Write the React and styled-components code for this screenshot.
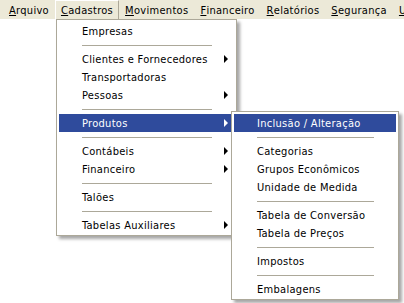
import styled, { createGlobalStyle } from 'styled-components'

const Global = createGlobalStyle`
  body {
    margin: 0;
    background: #fff;
    font-family: "DejaVu Sans Condensed", "DejaVu Sans", sans-serif;
    font-size: 11px;
    letter-spacing: 0.3px;
    color: #000;
  }
`

const Page = styled.div`
  width: 404px;
  height: 303px;
  overflow: hidden;
  background: #fff;
`

const MenuBar = styled.div`
  display: flex;
  height: 19px;
  align-items: stretch;
  padding-left: 3px;
  background: #ece9d8;
  white-space: nowrap;
`

const BarItem = styled.div`
  position: relative;
  display: flex;
  align-items: center;
  padding: 0 5px;
  border: 1px solid transparent;
  border-bottom: none;
  ${(p) => p.$open && `
    border-color: #fff #aca899 transparent #fff;
  `}
`

const Key = styled.span`
  text-decoration: underline;
`

const Menu = styled.div`
  position: absolute;
  left: ${(p) => p.$left}px;
  top: ${(p) => p.$top}px;
  width: ${(p) => p.$width}px;
  display: flex;
  flex-direction: column;
  padding: 2px 2px 1px;
  background: #fff;
  border: 1px solid #aca899;
  box-shadow: 3px 3px 3px rgba(0, 0, 0, 0.35);
  z-index: 2;
`

const Row = styled.div`
  position: relative;
  display: flex;
  align-items: center;
  height: 18px;
  padding-left: 23px;
  padding-right: 6px;
  color: ${(p) => (p.$active ? '#fff' : '#000')};
  background: ${(p) => (p.$active ? '#2f4b9c' : 'transparent')};
`

const Label = styled.span`
  flex: 1;
`

const Arrow = styled.span`
  width: 0;
  height: 0;
  border-top: 4px solid transparent;
  border-bottom: 4px solid transparent;
  border-left: 4px solid ${(p) => (p.$active ? '#fff' : '#000')};
`

const Sep = styled.div`
  height: 1px;
  margin: 5px 22px 4px 23px;
  background: #aca899;
`

const cadastros = [
  { label: 'Empresas' },
  'sep',
  { label: 'Clientes e Fornecedores', sub: true },
  { label: 'Transportadoras' },
  { label: 'Pessoas', sub: true },
  'sep',
  { label: 'Produtos', sub: true, active: true },
  'sep',
  { label: 'Contábeis', sub: true },
  { label: 'Financeiro', sub: true },
  'sep',
  { label: 'Talões' },
  'sep',
  { label: 'Tabelas Auxiliares', sub: true },
]

const produtos = [
  { label: 'Inclusão / Alteração', active: true },
  'sep',
  { label: 'Categorias' },
  { label: 'Grupos Econômicos' },
  { label: 'Unidade de Medida' },
  'sep',
  { label: 'Tabela de Conversão' },
  { label: 'Tabela de Preços' },
  'sep',
  { label: 'Impostos' },
  'sep',
  { label: 'Embalagens' },
]

const bar = [
  ['A', 'rquivo'],
  ['C', 'adastros'],
  ['M', 'ovimentos'],
  ['F', 'inanceiro'],
  ['R', 'elatórios'],
  ['S', 'egurança'],
  ['U', 'tilitários'],
]

const renderItems = (items, children) =>
  items.map((it, i) =>
    it === 'sep' ? (
      <Sep key={i} />
    ) : (
      <Row key={i} $active={it.active}>
        <Label>{it.label}</Label>
        {it.sub && <Arrow $active={it.active} />}
        {it.active && children}
      </Row>
    )
  )

const App = () => {
  const submenu = (
    <Menu $left={172} $top={-3} $width={162}>
      {renderItems(produtos)}
    </Menu>
  )

  return (
    <Page>
      <Global />
      <MenuBar>
        {bar.map(([k, rest], i) => (
          <BarItem key={i} $open={i === 1}>
            <Key>{k}</Key>
            {rest}
            {i === 1 && (
              <Menu $left={0} $top={18} $width={175}>
                {renderItems(cadastros, submenu)}
              </Menu>
            )}
          </BarItem>
        ))}
      </MenuBar>
    </Page>
  )
}

export default App
